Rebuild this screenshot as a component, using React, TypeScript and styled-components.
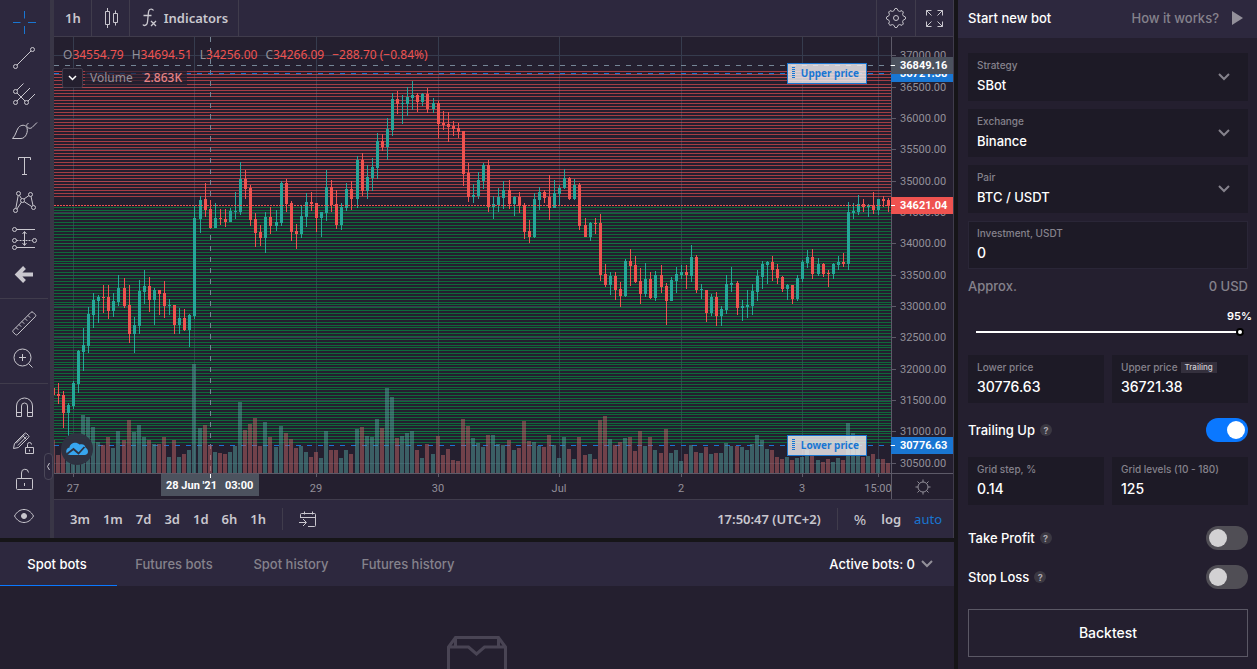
import React from "react";
import styled, { createGlobalStyle, css } from "styled-components";

/* ---------- theme values ---------- */

const c = {
  page: "#161518",
  panel: "#241f2f",
  bar: "#2d283e",
  field: "#1d1a26",
  line: "#403c4c",
  axis: "#5d5a68",
  grid: "#363c4e",
  text: "#c9c7ce",
  muted: "#85828c",
  blue: "#1976d2",
  accent: "#0a78ff",
  up: "#26a69a",
  down: "#ef5350",
};
const chartFont = `"Noto Sans", "Open Sans", sans-serif`;
const uiFont = `Inter, "Liberation Sans", sans-serif`;

const GlobalStyle = createGlobalStyle`
  * { box-sizing: border-box; }
  body { margin: 0; background: ${c.page}; color: #fff; font-family: ${uiFont}; }
  button, input, select { font: inherit; color: inherit; }
  button { background: none; border: 0; padding: 0; cursor: pointer; }
`;

/* ---------- market data ---------- */

// One row per hour from 26 June 20:00: direction, body top, body bottom, high, low, volume.
const series = `
r 388 395 388 395 33|r 394 396 383 404 18|r 395 413 391 428 24|g 405 413 403 437 22|g 383 406 381 409 25|g 351 384 350 393 24
g 345 352 328 371 58|g 314 346 307 353 56|g 300 315 293 328 46|g 297 301 295 323 31|r 297 298 285 313 28|r 297 311 285 319 36
g 301 311 293 317 25|g 288 302 275 306 42|r 288 306 278 308 33|r 305 334 285 343 53|g 325 334 317 353 41|g 291 326 280 334 48
g 286 292 270 304 36|r 286 300 277 312 33|g 290 300 288 325 29|r 290 294 290 315 29|r 293 306 281 318 36|g 305 306 299 315 16
r 305 325 305 334 33|g 318 325 308 334 16|r 318 330 309 331 19|g 315 330 314 347 23|g 218 316 206 319 109|g 200 219 196 233 45
r 199 210 183 217 48|r 209 228 200 228 28|g 218 228 203 228 21|r 218 219 209 225 20|r 219 222 209 227 19|g 211 222 208 222 21
g 211 212 192 219 27|g 179 212 162 215 71|r 179 189 170 199 43|r 188 220 185 226 49|r 219 233 213 247 55|r 232 238 225 246 27
g 217 238 212 253 51|r 217 226 207 234 36|g 222 226 210 231 26|g 183 223 181 226 47|r 183 204 179 212 40|r 203 232 201 241 34
r 231 234 224 249 25|g 216 234 206 238 27|g 202 217 193 227 21|r 202 204 192 211 16|r 203 218 203 232 21|g 212 218 212 237 15
g 187 213 170 221 42|r 187 205 180 212 23|r 204 225 190 229 23|g 207 225 203 230 15|g 189 208 183 211 23|r 189 199 181 210 19
g 160 199 156 208 44|r 160 191 153 196 46|g 177 191 165 199 37|g 167 178 158 191 36|g 141 168 133 179 54|r 141 147 134 151 45
g 129 147 118 160 85|g 99 130 93 136 76|r 99 104 91 114 35|g 103 104 95 124 37|g 97 104 87 116 40|g 95 98 81 110 42
r 95 102 93 112 23|g 94 102 93 106 15|r 94 109 88 113 29|g 103 109 98 113 19|r 103 124 101 138 37|r 123 125 111 130 18
r 124 127 112 142 24|r 126 129 121 136 13|r 128 132 123 138 12|r 131 174 131 186 54|r 173 197 163 202 47|g 195 197 184 203 35
g 180 196 172 199 30|g 165 181 163 189 26|r 165 207 160 212 38|g 204 207 196 219 38|g 197 205 188 212 29|g 190 198 181 209 28
r 190 204 180 209 33|g 197 204 196 216 23|r 197 206 192 213 25|r 205 232 203 239 52|r 231 237 220 243 32|g 199 237 193 238 31
g 192 200 187 210 27|r 192 198 190 203 26|r 197 208 175 220 38|g 193 208 180 208 28|g 188 194 185 205 15|g 178 188 169 189 36
r 178 199 177 200 24|g 185 199 179 200 14|r 185 226 183 230 36|r 225 237 218 237 18|g 223 237 222 241 19|r 223 224 218 234 14
r 223 275 214 281 53|r 274 285 264 287 57|g 276 285 272 295 34|r 276 290 272 300 28|r 289 296 282 307 31|g 261 296 259 297 35
r 261 266 249 286 36|r 265 282 256 283 22|r 281 294 268 304 42|g 279 294 263 297 27|r 279 298 272 299 36|g 275 298 271 301 23
r 275 287 265 293 20|r 286 301 283 325 44|g 280 301 277 301 20|g 274 281 267 293 23|g 272 275 265 279 12|r 272 275 265 289 19
g 257 276 245 282 28|r 257 290 255 293 21|g 289 290 284 299 20|r 290 313 290 322 26|g 297 313 294 316 19|r 297 316 292 326 20
g 309 316 306 326 20|g 284 310 275 314 30|g 283 285 267 292 27|r 283 308 281 315 27|g 306 308 300 321 26|g 305 307 290 318 23
g 291 306 284 315 29|g 276 292 270 301 38|g 264 277 261 289 33|g 262 265 261 284 24|r 262 270 256 281 23|r 269 278 264 284 16
r 277 289 276 292 14|g 285 289 284 300 16|r 285 299 285 304 13|g 278 299 275 301 15|g 262 279 260 282 16|g 257 263 250 268 23
r 257 274 249 279 18|g 264 274 258 276 13|r 264 274 263 277 11|r 273 274 270 287 14|g 264 274 263 279 11|g 262 265 256 270 15
r 262 264 253 267 13|g 212 264 202 270 50|g 211 213 203 219 40|g 204 212 195 215 31|r 204 207 199 212 16|g 205 207 204 217 17
r 205 210 192 214 19|g 199 210 199 215 14|r 199 201 196 207 14|r 200 206 198 212 10`;

const TOP = 37; // offset of the plot inside the terminal
const PLOT_W = 837;
const PLOT_H = 436;

const candles = series
  .trim()
  .split(/[|\n]/)
  .map((row, i) => {
    const [dir, ...n] = row.split(" ");
    const [top, bottom, high, low, volume] = n.map(Number);
    return {
      x: Math.round(18.86 + (i - 4) * 5.066),
      color: dir === "g" ? c.up : c.down,
      top: top - TOP,
      bottom: bottom - TOP,
      high: high - TOP,
      low: low - TOP,
      volume,
    };
  });

const priceToY = (p: number) => Math.floor(87.3 + (36500 - p) * 0.06267) - TOP;
const ladder = (start: number, count: number) =>
  Array.from({ length: count }, (_, k) => priceToY(start * Math.exp(-0.001399 * k)));
const sellLevels = ladder(36755, 41);
const buyLevels = ladder(34588, 83);
const priceTicks = Array.from({ length: 14 }, (_, k) => 37000 - k * 500);
const timeTicks: [string, number][] = [
  ["27", 19],
  ["", 140],
  ["29", 262],
  ["30", 384],
  ["Jul", 505],
  ["2", 627],
  ["3", 748],
  ["15:00", 824],
];

/* ---------- layout ---------- */

const Page = styled.div`
  display: flex;
  gap: 4px;
  height: 100vh;
  overflow: hidden;
`;
const Main = styled.main`
  flex: 1;
  min-width: 0;
  display: flex;
  flex-direction: column;
  gap: 4px;
`;
const Terminal = styled.section`
  display: flex;
  flex: none;
  background: ${c.bar};
  font-family: ${chartFont};
`;

/* ---------- drawing tools ---------- */

const Tools = styled.nav`
  position: relative;
  display: flex;
  flex-direction: column;
  align-items: center;
  width: 54px;
  padding: 4px 2px 4px 0;
  border-right: 4px solid #393646;
`;
const ToolButton = styled.button<{ $active?: boolean }>`
  display: grid;
  place-items: center;
  width: 48px;
  height: 36px;
  color: ${(p) => (p.$active ? c.blue : c.text)};
`;
const ToolDivider = styled.hr`
  width: 48px;
  height: 1px;
  margin: 6px 0;
  border: 0;
  background: ${c.line};
`;
const Collapse = styled.button`
  position: absolute;
  right: -3px;
  bottom: 58px;
  display: grid;
  place-items: center;
  width: 9px;
  height: 27px;
  border: 1px solid #4a4758;
  border-radius: 4px;
  background: ${c.bar};
  color: ${c.text};
`;
const Icon = styled.svg.attrs({ fill: "none", stroke: "currentColor", "aria-hidden": true })`
  display: block;
`;

const toolGroups: { name: string; art: React.ReactNode }[][] = [
  [
    { name: "Cross", art: <path d="M3 14.5h7.5M18 14.5h8M14.5 3v7.5M14.5 18v8" /> },
    {
      name: "Trend line",
      art: (
        <>
          <circle cx="5.5" cy="22.5" r="2" />
          <circle cx="22.5" cy="5.5" r="2" />
          <path d="M7 21L21 7" />
        </>
      ),
    },
    {
      name: "Pitchfork",
      art: (
        <>
          <circle cx="5.5" cy="11.5" r="2" />
          <circle cx="5.5" cy="22.5" r="2" />
          <circle cx="16.5" cy="22.5" r="2" />
          <path d="M7 10l6.500-6.500M7 21L20 8M18 21l7-7M7 13l8 8" />
        </>
      ),
    },
    {
      name: "Brush",
      art: (
        <path d="M2.500 22.500H11C16 22.500 18.500 15 16.800 11.500C15.500 8.500 11 8.500 8.500 11.500C6 15 6 19 2.500 22.500ZM27 6.500L22 11.500C20 13.500 15.500 11.500 17 8.500L18.500 7" />
      ),
    },
    { name: "Text", art: <path d="M8.500 8V5.500h12V8M14.500 5.500v17M12 22.500h5" /> },
    {
      name: "Patterns",
      art: (
        <>
          <circle cx="5.500" cy="22.500" r="2" />
          <circle cx="8.500" cy="5.500" r="2" />
          <circle cx="12.500" cy="12.500" r="2" />
          <circle cx="20.500" cy="6.500" r="2" />
          <circle cx="23.500" cy="19.500" r="2" />
          <path d="M5.800 20.500L8.200 7.500M9.500 7.300l2 3.500M14 11l5-3.500M21 8.500l2 9M7 21l4.500-7M14.200 13.700l7.500 4.800" />
        </>
      ),
    },
    {
      name: "Position",
      art: (
        <>
          <circle cx="4.500" cy="5.500" r="2" />
          <circle cx="4.500" cy="16.500" r="2" />
          <circle cx="24.500" cy="16.500" r="2" />
          <circle cx="4.500" cy="23.500" r="2" />
          <path d="M6.500 5.500H25M6.500 23.500H25M14.500 8v13M12.500 10l2-2.500 2 2.500M12.500 19l2 2.500 2-2.500" />
          <path d="M6.500 16.500h16" strokeDasharray="2 1" />
        </>
      ),
    },
    { name: "Back", art: <path d="M23 14.500H9M14.500 7.500l-7 7 7 7" strokeWidth="4" /> },
  ],
  [
    {
      name: "Measure",
      art: (
        <path d="M3.200 21.300L21 3.300q1-1 2 0l2.300 2.300q1 1 0 2L7.500 25.500q-1 1-2 0L3.200 23.300q-1-1 0-2zM6 18.500l2.200 2.200M9 15.500l2.200 2.200M12 12.500l2.200 2.200M15 9.500l2.200 2.200M18 6.500l2.200 2.200" />
      ),
    },
    {
      name: "Zoom in",
      art: (
        <>
          <circle cx="12.500" cy="12.500" r="8.500" />
          <path d="M12.500 9v7M9 12.500h7M18.500 18.500l4 4" />
        </>
      ),
    },
  ],
  [
    {
      name: "Magnet",
      art: <path d="M6.500 22.500V12a8 8 0 0 1 16 0v10.500h-5V12a3 3 0 0 0-6 0v10.500zM6.500 18.500h5M17.500 18.500h5" />,
    },
    {
      name: "Stay in drawing mode",
      art: (
        <path d="M3.500 18.500l1-5L14.500 3.500q1-1 2 0l2 2q1 1 0 2L8.500 17.500zM6 13.500L15 4.500M7.800 15.500L17 6.200M12.500 5.500l4 4M15.500 17.500h8v6h-8zM17.500 17.500v-3a2 2 0 0 1 4 0M19.500 19.500v2" />
      ),
    },
    {
      name: "Lock all drawings",
      art: (
        <path d="M7.500 12.500h14q1 0 1 1v9q0 1-1 1h-14q-1 0-1-1v-9q0-1 1-1zM11.500 12.500V7a3.500 3.500 0 0 1 7-.5M14.500 17v3" />
      ),
    },
    {
      name: "Hide all drawings",
      art: (
        <>
          <path d="M4.500 14C7 9.500 10.500 7.500 14 7.500S21 9.500 23.500 14C21 18.500 17.500 20.500 14 20.500S7 18.500 4.500 14z" />
          <circle cx="14" cy="14" r="2.500" fill="currentColor" />
        </>
      ),
    },
  ],
];

/* ---------- chart ---------- */

const ChartColumn = styled.div`
  flex: 1;
  min-width: 0;
  border-right: 1px solid ${c.line};
`;
const TopBar = styled.div`
  display: flex;
  height: 37px;
  border-bottom: 1px solid ${c.line};
`;
const TopButton = styled.button<{ $side?: "left" | "right" }>`
  display: flex;
  align-items: center;
  gap: 7px;
  color: ${c.text};
  font-size: 13px;
  font-weight: 600;
  ${(p) =>
    p.$side === "right"
      ? css`
          padding: 0 9px;
          border-left: 1px solid ${c.line};
        `
      : css`
          padding: 0 10px 0 11px;
          border-right: 1px solid ${c.line};
        `}
`;
const Spacer = styled.div`
  flex: 1;
`;
const ChartGrid = styled.div`
  display: grid;
  grid-template-columns: 1fr 62px;
  grid-template-rows: ${PLOT_H}px 26px;
  background: ${c.panel};
  border-bottom: 1px solid ${c.line};
`;
const Plot = styled.div`
  position: relative;
  min-width: 0;
`;
const Canvas = styled.svg`
  display: block;
  width: 100%;
  height: 100%;
`;
const AxisText = styled.text<{ $bright?: boolean }>`
  font-family: Roboto, ${chartFont};
  font-size: 11px;
  font-weight: ${(p) => (p.$bright ? 700 : 400)};
  fill: ${(p) => (p.$bright ? "#fff" : "#93909a")};
`;
const Legend = styled.div`
  position: absolute;
  top: 9px;
  left: 8px;
  display: grid;
  gap: 4px;
  color: #93909a;
  font-size: 12px;
  line-height: 18px;
`;
const Quotes = styled.div`
  display: flex;
  gap: 8px;
  padding-left: 1px;
  b {
    font-weight: 400;
    color: ${c.down};
  }
`;
const VolumeRow = styled.div`
  display: flex;
  align-items: center;
  gap: 2px;
`;
const LegendToggle = styled.button`
  display: grid;
  place-items: center;
  width: 21px;
  height: 20px;
  border: 1px solid ${c.line};
  border-radius: 2px;
  background: ${c.panel};
  color: #fff;
`;
const VolumeText = styled.div`
  display: flex;
  gap: 11px;
  padding: 0 5px;
  background: rgba(36, 31, 47, 0.7);
  b {
    font-weight: 500;
    color: #e68487;
  }
`;
const PriceHandle = styled.div<{ $top: number }>`
  position: absolute;
  right: 24px;
  top: ${(p) => p.$top}px;
  display: flex;
  align-items: center;
  justify-content: space-between;
  width: 80px;
  height: 21px;
  padding: 0 7px 2px 4px;
  border: 1px solid ${c.blue};
  background: rgba(240, 238, 240, 0.82);
  color: ${c.blue};
  font-size: 10px;
  font-weight: 700;
  &::before {
    content: "";
    width: 3px;
    height: 11px;
    background: linear-gradient(${c.blue} 50%, transparent 50%) 0 0 / 3px 2px;
  }
`;
const Logo = styled.svg`
  position: absolute;
  left: 7px;
  bottom: 8px;
`;
const AxisSettings = styled.button`
  display: grid;
  place-items: center;
  border: solid ${c.axis};
  border-width: 1px 0 0 1px;
  color: #93909a;
`;
const BottomBar = styled.div`
  display: flex;
  align-items: center;
  gap: 13px;
  height: 38px;
  padding: 0 11px 0 16px;
  color: ${c.text};
  font-size: 13px;
  font-weight: 600;
`;
const BarDivider = styled.span`
  width: 1px;
  height: 22px;
  margin: 0 3px;
  background: ${c.line};
`;
const ScaleButton = styled.button<{ $on?: boolean }>`
  font-weight: ${(p) => (p.$on ? 400 : 600)};
  color: ${(p) => (p.$on ? c.blue : "inherit")};
`;
const PercentButton = styled.button`
  padding-right: 2px;
  font-size: 15px;
  font-weight: 400;
`;

const PlotCanvas = () => (
  <Canvas viewBox={`0 0 ${PLOT_W} ${PLOT_H}`} preserveAspectRatio="none" shapeRendering="crispEdges">
    {priceTicks.map((p) => (
      <rect key={p} y={priceToY(p)} width={PLOT_W} height="1" fill={c.grid} />
    ))}
    {timeTicks.map(([, x]) => (
      <rect key={x} x={x} width="1" height={PLOT_H} fill={c.grid} />
    ))}
    {sellLevels.map((y) => (
      <rect key={y} y={y} width={PLOT_W} height="1" fill="#e14b4e" opacity="0.68" />
    ))}
    {buyLevels.map((y) => (
      <rect key={y} y={y} width={PLOT_W} height="1" fill="#068a40" opacity="0.68" />
    ))}
    <path d={`M0 28.500H${PLOT_W}M156.500 0V${PLOT_H}`} stroke="#758696" strokeDasharray="5 6" />
    <path d={`M0 36.500H${PLOT_W}M0 408.500H${PLOT_W}`} stroke={c.blue} strokeDasharray="5 6" />
    {candles.map((k) => (
      <rect
        key={k.x}
        x={k.x - 2}
        y={PLOT_H - k.volume}
        width="4"
        height={k.volume}
        fill={k.color === c.up ? "#4f9391" : "#b15d60"}
        opacity="0.55"
      />
    ))}
    {candles.map((k) => (
      <g key={k.x} fill={k.color}>
        <rect x={k.x} y={k.high} width="1" height={k.low - k.high} />
        <rect x={k.x - 1} y={k.top} width="3" height={k.bottom - k.top} />
      </g>
    ))}
    <path d={`M0 168.500H${PLOT_W}`} stroke={c.down} strokeDasharray="2 1" />
  </Canvas>
);

const priceTags = [
  { value: "36721.38", y: 36, color: c.blue },
  { value: "36849.16", y: 28, color: "#4c525e" },
  { value: "34621.04", y: 168, color: c.down },
  { value: "30776.63", y: 408, color: c.blue },
];

const PriceAxis = () => (
  <Canvas>
    <rect width="1" height={PLOT_H} fill={c.axis} />
    {priceTicks.map((p) => (
      <g key={p}>
        <rect x="1" y={priceToY(p)} width="4" height="1" fill={c.axis} />
        <AxisText x="9" y={priceToY(p) + 4}>
          {p.toFixed(2)}
        </AxisText>
      </g>
    ))}
    {priceTags.map((t) => (
      <g key={t.value}>
        <rect y={t.y - 8} width="62" height="17" fill={t.color} />
        <rect y={t.y} width="4" height="1" fill="#fff" />
        <AxisText $bright x="9" y={t.y + 4}>
          {t.value}
        </AxisText>
      </g>
    ))}
  </Canvas>
);

const at = (x: number) => `${(x / PLOT_W) * 100}%`;

const TimeAxis = () => (
  <Canvas>
    <rect width="100%" height="1" fill={c.axis} />
    {timeTicks.map(([label, x]) => (
      <g key={x}>
        <rect x={at(x)} width="1" height="4" fill={c.axis} />
        <AxisText x={at(x)} y="19" textAnchor="middle">
          {label}
        </AxisText>
      </g>
    ))}
    <rect x={at(107)} y="1" width="98" height="22" fill="#4c525e" />
    <rect x={at(156)} y="1" width="1" height="4" fill="#fff" />
    <AxisText $bright x={at(112)} y="16">
      28 Jun '21
    </AxisText>
    <AxisText $bright x={at(171)} y="16">
      03:00
    </AxisText>
  </Canvas>
);

/* ---------- bots list ---------- */

const Bots = styled.section`
  flex: 1;
  display: flex;
  flex-direction: column;
  align-items: center;
  min-height: 0;
  background: ${c.panel};
  overflow: hidden;
`;
const Tabs = styled.div`
  display: flex;
  flex: none;
  align-self: stretch;
  height: 44px;
  padding-right: 21px;
  background: ${c.bar};
`;
const Tab = styled.button<{ $active?: boolean }>`
  width: 117px;
  border-bottom: 1px solid ${(p) => (p.$active ? c.accent : "transparent")};
  padding-right: 3px;
  color: ${(p) => (p.$active ? "#fff" : c.muted)};
  font-size: 13px;
  font-weight: 500;
`;
const ActiveBots = styled.button`
  display: flex;
  align-items: center;
  gap: 6px;
  font-size: 13px;
  font-weight: 500;
  svg {
    color: #93909a;
  }
`;
const EmptyBox = styled.svg`
  flex: none;
  margin-top: 50px;
`;

/* ---------- bot form ---------- */

const Side = styled.aside`
  width: 299px;
  background: ${c.panel};
  font-size: 13px;
  font-weight: 500;
`;
const SideHeader = styled.header`
  display: flex;
  align-items: center;
  justify-content: space-between;
  height: 38px;
  padding: 0 14px 2px 10px;
  background: ${c.bar};
`;
const Title = styled.h1`
  margin: 0;
  font-size: 13px;
  font-weight: 500;
`;
const HelpLink = styled.a`
  display: flex;
  align-items: center;
  gap: 13px;
  color: ${c.muted};
  text-decoration: none;
`;
const Form = styled.form`
  display: grid;
  gap: 8px;
  padding: 15px 9px 12px 10px;
`;
const Pair = styled.div`
  display: grid;
  grid-template-columns: 1fr 1fr;
  gap: 8px;
  margin: 7px 0;
`;
const FieldBox = styled.label<{ $outlined?: boolean }>`
  position: relative;
  display: grid;
  align-content: center;
  height: 48px;
  padding: 0 8px 1px;
  border: 1px solid ${(p) => (p.$outlined ? "#2a2637" : "transparent")};
  background: ${c.field};
`;
const FieldName = styled.span`
  display: flex;
  align-items: center;
  gap: 3px;
  height: 16px;
  color: ${c.muted};
  font-size: 10px;
  white-space: nowrap;
`;
const valueStyle = css`
  width: 100%;
  height: 23px;
  padding: 0;
  border: 0;
  outline: 0;
  appearance: none;
  background: transparent;
  color: #fff;
`;
const Select = styled.select`
  ${valueStyle}
  font-size: 13px;
`;
const Input = styled.input`
  ${valueStyle}
  font-size: 14px;
`;
const SelectArrow = styled(Icon)`
  position: absolute;
  right: 17px;
  top: 19px;
  color: ${c.muted};
  pointer-events: none;
`;
const Tag = styled.span`
  padding: 0 4px;
  background: #34303d;
  color: #cfcdd3;
  font-size: 8px;
  line-height: 11px;
`;
const Approx = styled.div`
  display: flex;
  justify-content: space-between;
  line-height: 18px;
  color: ${c.muted};
`;
const Share = styled.label`
  display: grid;
  gap: 4px;
  margin: 5px -4px 4px 8px;
  font-size: 11px;
  font-weight: 600;
  line-height: 16px;
  text-align: right;
`;
const Range = styled.input`
  width: calc(100% - 8px);
  height: 8px;
  margin: 0;
  appearance: none;
  background: linear-gradient(#fff, #fff) center / 100% 2px no-repeat;
  &::-webkit-slider-thumb {
    appearance: none;
    width: 8px;
    height: 8px;
    border: 2px solid #000;
    border-radius: 50%;
    background: #fff;
  }
`;
const Switches = styled.div`
  display: grid;
  gap: 15px;
  margin: 6px 0 12px;
`;
const SwitchRow = styled.label`
  display: flex;
  align-items: center;
  gap: 5px;
  height: 24px;
`;
const Help = styled.span`
  display: grid;
  place-items: center;
  width: 12px;
  height: 12px;
  border-radius: 50%;
  background: #3b3842;
  color: #a9a7ae;
  font-size: 9px;
  font-weight: 700;
`;
const Switch = styled.input`
  display: grid;
  align-items: center;
  width: 42px;
  height: 24px;
  margin: 0 0 0 auto;
  padding: 0 3px;
  border-radius: 12px;
  appearance: none;
  background: #504e55;
  &::before {
    content: "";
    width: 18px;
    height: 18px;
    border-radius: 50%;
    background: #d2d1d3;
  }
  &:checked {
    background: ${c.accent};
    justify-items: end;
  }
  &:checked::before {
    background: #fff;
  }
`;
const Backtest = styled.button`
  height: 48px;
  padding-bottom: 2px;
  border: 1px solid #5b5865;
  font-size: 14px;
`;

const Chevron = () => (
  <Icon width="12" height="8" strokeWidth="2">
    <path d="M1 1l5 5 5-5" />
  </Icon>
);

const SelectField = ({ id, label, value }: { id: string; label: string; value: string }) => (
  <FieldBox htmlFor={id}>
    <FieldName>{label}</FieldName>
    <Select id={id} defaultValue={value}>
      <option>{value}</option>
    </Select>
    <SelectArrow width="12" height="8" strokeWidth="2">
      <path d="M1 1l5 5 5-5" />
    </SelectArrow>
  </FieldBox>
);

const TextField = ({
  id,
  label,
  value,
  tag,
  outlined,
}: {
  id: string;
  label: string;
  value: string;
  tag?: string;
  outlined?: boolean;
}) => (
  <FieldBox htmlFor={id} $outlined={outlined}>
    <FieldName>
      {label}
      {tag && <Tag>{tag}</Tag>}
    </FieldName>
    <Input id={id} defaultValue={value} />
  </FieldBox>
);

const SwitchField = ({ label, on }: { label: string; on?: boolean }) => (
  <SwitchRow>
    {label}
    <Help>?</Help>
    <Switch type="checkbox" defaultChecked={on} />
  </SwitchRow>
);

// Outline of the eight-toothed settings cog.
const cog = Array.from({ length: 32 }, (_, i) => {
  const r = i % 4 < 2 ? 9.5 : 7.5;
  const a = ((i + 0.5) / 32) * Math.PI * 2 - Math.PI / 2 - Math.PI / 16;
  return `${(11 + r * Math.cos(a)).toFixed(1)} ${(11 + r * Math.sin(a)).toFixed(1)}`;
}).join("L");

export default function App() {
  return (
    <>
      <GlobalStyle />
      <Page>
        <Main>
          <Terminal>
            <Tools aria-label="Drawing tools">
              {toolGroups.map((group, g) => (
                <React.Fragment key={g}>
                  {g > 0 && <ToolDivider />}
                  {group.map((tool) => (
                    <ToolButton key={tool.name} aria-label={tool.name} $active={tool.name === "Cross"}>
                      <Icon width="28" height="28">
                        {tool.art}
                      </Icon>
                    </ToolButton>
                  ))}
                </React.Fragment>
              ))}
              <Collapse aria-label="Collapse tools">
                <Icon width="5" height="9">
                  <path d="M3.500 1L1.500 4.500 3.500 8" />
                </Icon>
              </Collapse>
            </Tools>

            <ChartColumn>
              <TopBar>
                <TopButton>1h</TopButton>
                <TopButton aria-label="Candles">
                  <Icon width="16" height="22" viewBox="0 0 16 22">
                    <path d="M2.500 4.500h4v13h-4zM4.500 1v3.500M4.500 17.500V21M10.500 6.500h4v9h-4zM12.500 3.500v3M12.500 15.500v3" />
                  </Icon>
                </TopButton>
                <TopButton>
                  <Icon width="16" height="20" viewBox="0 0 16 20">
                    <path d="M12.500 2.500Q11.500 .800 9.500 1.200C7.500 1.500 7.500 3 7.300 6L6.500 14C6.200 16.500 5.500 17.500 3.500 17.500Q2.300 17.500 2 16.500M2.500 7.500h8M10 13l5 5M15 13l-5 5" strokeWidth="1.300" />
                  </Icon>
                  Indicators
                </TopButton>
                <Spacer />
                <TopButton $side="right" aria-label="Settings">
                  <Icon width="20" height="22" viewBox="1 0 20 22">
                    <path d={`M${cog}Z`} strokeLinejoin="round" />
                    <circle cx="11" cy="11" r="2.500" />
                  </Icon>
                </TopButton>
                <TopButton $side="right" aria-label="Full screen">
                  <Icon width="19" height="17" viewBox="-1 0 19 17">
                    <path d="M.500 5.500v-5h5M.500 .500l5 5M11.500 .500h5v5M16.500 .500l-5 5M.500 11.500v5h5M.500 16.500l5-5M11.500 16.500h5v-5M16.500 16.500l-5-5" />
                  </Icon>
                </TopButton>
              </TopBar>

              <ChartGrid>
                <Plot>
                  <PlotCanvas />
                  <Legend>
                    <Quotes>
                      <span>O<b>34554.79</b></span>
                      <span>H<b>34694.51</b></span>
                      <span>L<b>34256.00</b></span>
                      <span>C<b>34266.09</b></span>
                      <b>−288.70 (−0.84%)</b>
                    </Quotes>
                    <VolumeRow>
                      <LegendToggle aria-label="Collapse legend">
                        <Icon width="9" height="6" strokeWidth="1.500">
                          <path d="M1 1l3.500 3.500L8 1" />
                        </Icon>
                      </LegendToggle>
                      <VolumeText>
                        Volume <b>2.863K</b>
                      </VolumeText>
                    </VolumeRow>
                  </Legend>
                  <PriceHandle $top={26}>Upper price</PriceHandle>
                  <PriceHandle $top={398}>Lower price</PriceHandle>
                  <Logo width="32" height="32" aria-label="Chart provider">
                    <circle cx="16" cy="16" r="16" fill="#2e3241" />
                    <path
                      d="M8.500 14.500C9 10 15 8 18.500 11.500c3-1 5.500 0 6 3 3.500 2 3.500 7.500-1 7.500H9.500C4 22 4 15.500 8.500 14.500z"
                      fill="#37a6ef"
                    />
                    <path d="M6 21l6.500-5 5 4.500 6-6.500" fill="none" stroke="#2e3241" strokeWidth="1.800" />
                  </Logo>
                </Plot>
                <PriceAxis />
                <TimeAxis />
                <AxisSettings aria-label="Scale settings">
                  <Icon width="16" height="16">
                    <circle cx="8" cy="8" r="5" />
                    <path d="M8 3V.500M8 13v2.500M3 8H.500M13 8h2.500M4.500 4.500l-2-2M11.500 4.500l2-2M4.500 11.500l-2 2M11.500 11.500l2 2" />
                  </Icon>
                </AxisSettings>
              </ChartGrid>

              <BottomBar>
                {["3m", "1m", "7d", "3d", "1d", "6h", "1h"].map((range) => (
                  <ScaleButton key={range}>{range}</ScaleButton>
                ))}
                <BarDivider />
                <ScaleButton aria-label="Go to date">
                  <Icon width="18" height="17">
                    <path d="M1.500 7V3.500q0-1 1-1h13q1 0 1 1v11q0 1-1 1H9M1.500 6.500h15M5.500 .500v3M13.500 .500v3M0 11.500h7M4 8l3.500 3.500L4 15" />
                  </Icon>
                </ScaleButton>
                <Spacer />
                <ScaleButton>17:50:47 (UTC+2)</ScaleButton>
                <BarDivider />
                <PercentButton>%</PercentButton>
                <ScaleButton>log</ScaleButton>
                <ScaleButton $on>auto</ScaleButton>
              </BottomBar>
            </ChartColumn>
          </Terminal>

          <Bots>
            <Tabs>
              <Tab $active>Spot bots</Tab>
              <Tab>Futures bots</Tab>
              <Tab>Spot history</Tab>
              <Tab>Futures history</Tab>
              <Spacer />
              <ActiveBots>
                Active bots: 0 <Chevron />
              </ActiveBots>
            </Tabs>
            <EmptyBox width="60" height="50" fill="none" stroke="#494454" strokeWidth="3">
              <path d="M1.500 50V11L8.500 1.500h43L58.500 11v39M1.500 11h20l8 7 8-7h21M8.500 1.500V11M51.500 1.500V11" />
            </EmptyBox>
          </Bots>
        </Main>

        <Side>
          <SideHeader>
            <Title>Start new bot</Title>
            <HelpLink href="#help">
              How it works?
              <svg width="11" height="14" aria-hidden="true">
                <path d="M0 0l11 7-11 7z" fill="#93909a" />
              </svg>
            </HelpLink>
          </SideHeader>
          <Form onSubmit={(e) => e.preventDefault()}>
            <SelectField id="strategy" label="Strategy" value="SBot" />
            <SelectField id="exchange" label="Exchange" value="Binance" />
            <SelectField id="pair" label="Pair" value="BTC / USDT" />
            <TextField id="investment" label="Investment, USDT" value="0" outlined />
            <Approx>
              <span>Approx.</span>
              <span>0 USD</span>
            </Approx>
            <Share>
              95%
              <Range type="range" min="0" max="95" defaultValue="95" />
            </Share>
            <Pair>
              <TextField id="lower" label="Lower price" value="30776.63" />
              <TextField id="upper" label="Upper price" value="36721.38" tag="Trailing" />
            </Pair>
            <SwitchField label="Trailing Up" on />
            <Pair>
              <TextField id="step" label="Grid step, %" value="0.14" />
              <TextField id="levels" label="Grid levels (10 - 180)" value="125" />
            </Pair>
            <Switches>
              <SwitchField label="Take Profit" />
              <SwitchField label="Stop Loss" />
            </Switches>
            <Backtest type="submit">Backtest</Backtest>
          </Form>
        </Side>
      </Page>
    </>
  );
}
